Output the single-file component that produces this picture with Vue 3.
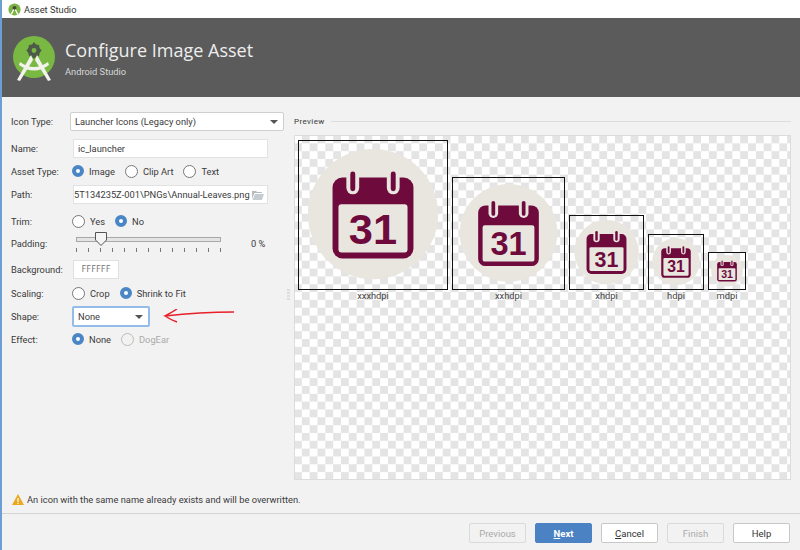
<template>
  <div class="window">
    <div class="titlebar">
      <svg class="title-logo" viewBox="0 0 16 16" width="13" height="13">
        <circle cx="8" cy="8" r="7.5" fill="#7cb342" />
        <circle cx="8" cy="6" r="2.4" fill="#3f4a3a" />
        <path d="M7 8 L4 14 M9 8 L12 14" stroke="#fff" stroke-width="1.6" fill="none" />
      </svg>
      <span>Asset Studio</span>
    </div>

    <header class="banner">
      <svg class="logo" viewBox="0 0 44 46" width="44" height="46">
        <circle cx="22" cy="21" r="21" fill="#78b843" />
        <path d="M22 6 l2 2.5 3 .6 .6 3 2 2.5 -2 2.5 -.6 3 -3 .6 -2 2 -2 -2 -3 -.6 -.6 -3 -2 -2.5 2 -2.5 .6 -3 3 -.6 z" fill="#4d5a47" />
        <circle cx="22" cy="14.5" r="2.4" fill="#78b843" />
        <path d="M19 19 L5 44 L8 45 L21 24 M25 19 L39 44 L36 45 L23 24" fill="#f3f3ee" />
        <path d="M8 26 Q22 36 36 26 L37 29 Q22 40 7 29 Z" fill="#f3f3ee" />
      </svg>
      <div class="banner-text">
        <h1>Configure Image Asset</h1>
        <p>Android Studio</p>
      </div>
    </header>

    <main class="content">
      <section class="form">
        <div class="row row-icontype">
          <label>Icon Type:</label>
          <div class="select wide">
            <span>Launcher Icons (Legacy only)</span>
            <i class="caret"></i>
          </div>
        </div>
        <div class="row row-name">
          <label>Name:</label>
          <div class="input">ic_launcher</div>
        </div>
        <div class="row row-asset">
          <label>Asset Type:</label>
          <div class="radios">
            <span class="radio on">Image</span>
            <span class="radio">Clip Art</span>
            <span class="radio">Text</span>
          </div>
        </div>
        <div class="row row-path">
          <label>Path:</label>
          <div class="input path">
            <span class="path-text">5T134235Z-001\PNGs\Annual-Leaves.png</span>
            <svg viewBox="0 0 12 10" width="12" height="10">
              <path d="M0 1 H4 L5 2 H10 V3 H2.5 L0 9 Z" fill="#b4bcc0" />
              <path d="M3 4 H12 L10 10 H0.5 Z" fill="#c6cdd0" />
            </svg>
          </div>
        </div>
        <div class="row row-trim">
          <label>Trim:</label>
          <div class="radios">
            <span class="radio">Yes</span>
            <span class="radio on">No</span>
          </div>
        </div>
        <div class="row row-padding">
          <label>Padding:</label>
          <div class="slider">
            <div class="track"></div>
            <svg class="thumb" viewBox="0 0 12 14" width="12" height="14">
              <path d="M.5 .5 H11.5 V8 L6 13.5 L.5 8 Z" fill="#f4f4f4" stroke="#555" />
            </svg>
            <div class="ticks">
              <i v-for="n in 13" :key="n"></i>
            </div>
          </div>
          <span class="percent">0 %</span>
        </div>
        <div class="row row-bg">
          <label>Background:</label>
          <div class="color">FFFFFF</div>
        </div>
        <div class="row row-scaling">
          <label>Scaling:</label>
          <div class="radios">
            <span class="radio">Crop</span>
            <span class="radio on">Shrink to Fit</span>
          </div>
        </div>
        <div class="row row-shape">
          <label>Shape:</label>
          <div class="select focused">
            <span>None</span>
            <i class="caret"></i>
          </div>
        </div>
        <div class="row row-effect">
          <label>Effect:</label>
          <div class="radios">
            <span class="radio on">None</span>
            <span class="radio disabled">DogEar</span>
          </div>
        </div>
      </section>

      <div class="grip"><i v-for="n in 4" :key="n"></i></div>

      <section class="preview">
        <div class="preview-title">
          <span>Preview</span>
          <hr />
        </div>
        <div class="canvas">
          <figure v-for="icon in icons" :key="icon.label" class="density">
            <div class="icon-box" :style="{ width: icon.size + 'px', height: icon.size + 'px' }">
              <svg viewBox="0 0 150 150" width="100%" height="100%">
                <circle cx="75" cy="74" r="66" fill="#e9e6e0" />
                <rect x="34" y="37" width="82" height="82" rx="10" fill="#6e0a3c" />
                <rect x="40" y="64" width="70" height="49" rx="3" fill="#e9e6e0" />
                <rect x="48" y="29" width="13" height="25" rx="6.5" fill="#e9e6e0" />
                <rect x="89" y="29" width="13" height="25" rx="6.5" fill="#e9e6e0" />
                <rect x="52" y="31" width="5" height="20" rx="2.5" fill="#6e0a3c" />
                <rect x="93" y="31" width="5" height="20" rx="2.5" fill="#6e0a3c" />
                <text x="75" y="104" text-anchor="middle" class="day">31</text>
              </svg>
            </div>
            <figcaption>{{ icon.label }}</figcaption>
          </figure>
        </div>
      </section>
    </main>

    <div class="warning">
      <svg viewBox="0 0 12 11" width="12" height="11">
        <path d="M6 0 L12 11 H0 Z" fill="#e8a91f" />
        <rect x="5.4" y="4" width="1.2" height="4" fill="#fff" />
        <rect x="5.4" y="8.8" width="1.2" height="1.2" fill="#fff" />
      </svg>
      <span>An icon with the same name already exists and will be overwritten.</span>
    </div>

    <footer class="buttons">
      <button class="disabled">Previous</button>
      <button class="primary"><u>N</u>ext</button>
      <button><u>C</u>ancel</button>
      <button class="disabled">Finish</button>
      <button>Help</button>
    </footer>

    <!-- hand-drawn annotation on top of the screenshot -->
    <svg class="annotation" viewBox="0 0 80 20" width="80" height="20">
      <path d="M74 3 Q40 3 5 7 Q11 11 17 13 M5 7 Q11 4 17 0" fill="none" stroke="#e8202a" stroke-width="1.5" />
    </svg>
  </div>
</template>

<script setup>
const icons = [
  { label: 'xxxhdpi', size: 150 },
  { label: 'xxhdpi', size: 113 },
  { label: 'xhdpi', size: 75 },
  { label: 'hdpi', size: 56 },
  { label: 'mdpi', size: 38 },
]
</script>

<style>
html, body { margin: 0; background: #f2f2f2; }
</style>

<style scoped>
.window {
  position: relative;
  width: 800px;
  height: 550px;
  overflow: hidden;
  box-sizing: border-box;
  border-left: 2px solid #6d9fd3;
  background: #f2f2f2;
  color: #3a3a3a;
  font-family: Roboto, "Open Sans", sans-serif;
  font-size: 9.3px;
  display: flex;
  flex-direction: column;
}
.titlebar {
  height: 18px;
  background: #fff;
  display: flex;
  align-items: center;
  gap: 3px;
  padding-left: 6px;
  color: #333;
}
.banner {
  height: 79px;
  background: #5b5b5b;
  display: flex;
  align-items: center;
  gap: 9px;
  padding-left: 10px;
}
.logo { margin-top: 2px; }
.banner-text h1 {
  margin: 0;
  font-family: "Open Sans", sans-serif;
  font-size: 18px;
  font-weight: 400;
  line-height: 25px;
  color: #eee;
}
.banner-text p {
  margin: 3px 0 0;
  font-size: 9.3px;
  line-height: 12px;
  color: #d8d8d8;
}

.content {
  height: 387px;
  display: flex;
}
.form {
  width: 282px;
  padding: 15px 0 0 9px;
  box-sizing: border-box;
}
.row {
  display: flex;
  align-items: center;
}
.row label {
  width: 61px;
  flex: none;
}
.row-name { margin-top: 8px; }
.row-asset { margin-top: 4px; height: 18px; }
.row-path { margin-top: 5px; }
.row-trim { margin-top: 8px; height: 18px; }
.row-padding { margin-top: 0; height: 26px; }
.row-bg { margin-top: 4px; }
.row-scaling { margin-top: 5px; height: 18px; }
.row-shape { margin-top: 4px; }
.row-effect { margin-top: 3px; height: 18px; }

.select {
  height: 19px;
  width: 76px;
  box-sizing: border-box;
  background: #fff;
  border: 1px solid #cfcfcf;
  border-radius: 2px;
  display: flex;
  align-items: center;
  justify-content: space-between;
  padding: 0 5px 0 4px;
}
.select.wide {
  width: 214px;
  margin-left: -2px;
}
.select.focused {
  width: 78px;
  height: 21px;
  border: 2px solid #93bcea;
  margin-left: 0;
}
.caret {
  width: 0;
  height: 0;
  border-left: 4px solid transparent;
  border-right: 4px solid transparent;
  border-top: 4px solid #555;
}
.input {
  width: 195px;
  height: 19px;
  box-sizing: border-box;
  margin-left: 1px;
  padding-left: 4px;
  background: #fff;
  border: 1px solid #e2e2e2;
  display: flex;
  align-items: center;
}
.path {
  justify-content: space-between;
  padding-right: 3px;
  padding-left: 0;
}
.path-text {
  width: 176px;
  white-space: nowrap;
}
.radios {
  display: flex;
  gap: 10px;
}
.radio {
  display: flex;
  align-items: center;
  gap: 5px;
  white-space: nowrap;
}
.radio::before {
  content: "";
  width: 11px;
  height: 11px;
  border: 1px solid #777;
  border-radius: 50%;
  background: #fff;
  box-sizing: content-box;
}
.radio.on::before {
  width: 4px;
  height: 4px;
  border: 4.5px solid #4a86c5;
}
.radio.disabled { color: #aaa; }
.radio.disabled::before { border-color: #bbb; background: transparent; }

.slider {
  position: relative;
  width: 145px;
  height: 26px;
  margin-left: 4px;
}
.track {
  position: absolute;
  left: 0;
  right: 0;
  top: 7px;
  height: 3px;
  background: #e4e4e4;
  border: 1px solid #a8a8a8;
}
.thumb {
  position: absolute;
  left: 19px;
  top: 2px;
}
.ticks {
  position: absolute;
  left: 0;
  right: 0;
  top: 18px;
  display: flex;
  justify-content: space-between;
}
.ticks i {
  width: 1px;
  height: 4px;
  background: #777;
}
.percent {
  margin-left: 30px;
}
.color {
  width: 46px;
  height: 19px;
  box-sizing: border-box;
  margin-left: 1px;
  background: #fff;
  border: 1px solid #e0e0e0;
  font-family: "DejaVu Sans Mono", monospace;
  font-size: 8px;
  color: #777;
  display: flex;
  align-items: center;
  justify-content: center;
}

.grip {
  width: 3px;
  margin-top: 192px;
  height: 12px;
  display: flex;
  flex-direction: column;
  gap: 1px;
  margin-left: 3px;
  flex: none;
}
.grip i {
  width: 3px;
  height: 2px;
  background: #ddd;
}

.preview {
  width: 497px;
  margin-left: 4px;
  padding-top: 18px;
}
.preview-title {
  display: flex;
  align-items: center;
  gap: 6px;
  height: 12px;
  font-size: 8px;
  letter-spacing: .4px;
}
.preview-title hr {
  flex: 1;
  margin: 0;
  border: 0;
  border-top: 1px solid #dcdcdc;
}
.canvas {
  margin-top: 8px;
  height: 345px;
  box-sizing: border-box;
  border: 1px solid #dcdcdc;
  padding: 3px 0 0 3px;
  display: flex;
  align-items: flex-start;
  gap: 4px;
  background: repeating-conic-gradient(#e4e4e4 0 25%, #fff 0 50%) -1px -.5px / 15.67px 15.67px;
}
.density {
  margin: 0;
  height: 162px;
  display: flex;
  flex-direction: column;
  justify-content: flex-end;
  align-items: center;
}
.icon-box {
  box-sizing: border-box;
  border: 1px solid #111;
  border-top-width: 1.5px;
  flex: none;
}
.icon-box svg { display: block; }
.day {
  font-family: "Liberation Sans", sans-serif;
  font-weight: 700;
  font-size: 44px;
  fill: #6e0a3c;
}
.density figcaption {
  height: 10px;
  margin-top: 1px;
  font-size: 9.3px;
  line-height: 10px;
  color: #444;
}

.warning {
  height: 30px;
  box-sizing: border-box;
  display: flex;
  align-items: center;
  gap: 3px;
  padding: 2px 0 0 10px;
  border-bottom: 1px solid #d4d4d4;
}
.buttons {
  flex: 1;
  display: flex;
  justify-content: flex-end;
  gap: 9px;
  padding: 9px 10px 0 0;
}
.buttons button {
  width: 57px;
  height: 20px;
  padding: 0;
  background: #fff;
  border: 1px solid #c8c8c8;
  border-radius: 2px;
  font: 9.5px Roboto, "Open Sans", sans-serif;
  color: #333;
}
.buttons button.disabled {
  background: #f2f2f2;
  border-color: #dadada;
  color: #aaa;
}
.buttons button.primary {
  background: #4a82c4;
  border-color: #4a82c4;
  color: #fff;
  font-weight: 700;
}

.annotation {
  position: absolute;
  left: 158px;
  top: 309px;
}
</style>
